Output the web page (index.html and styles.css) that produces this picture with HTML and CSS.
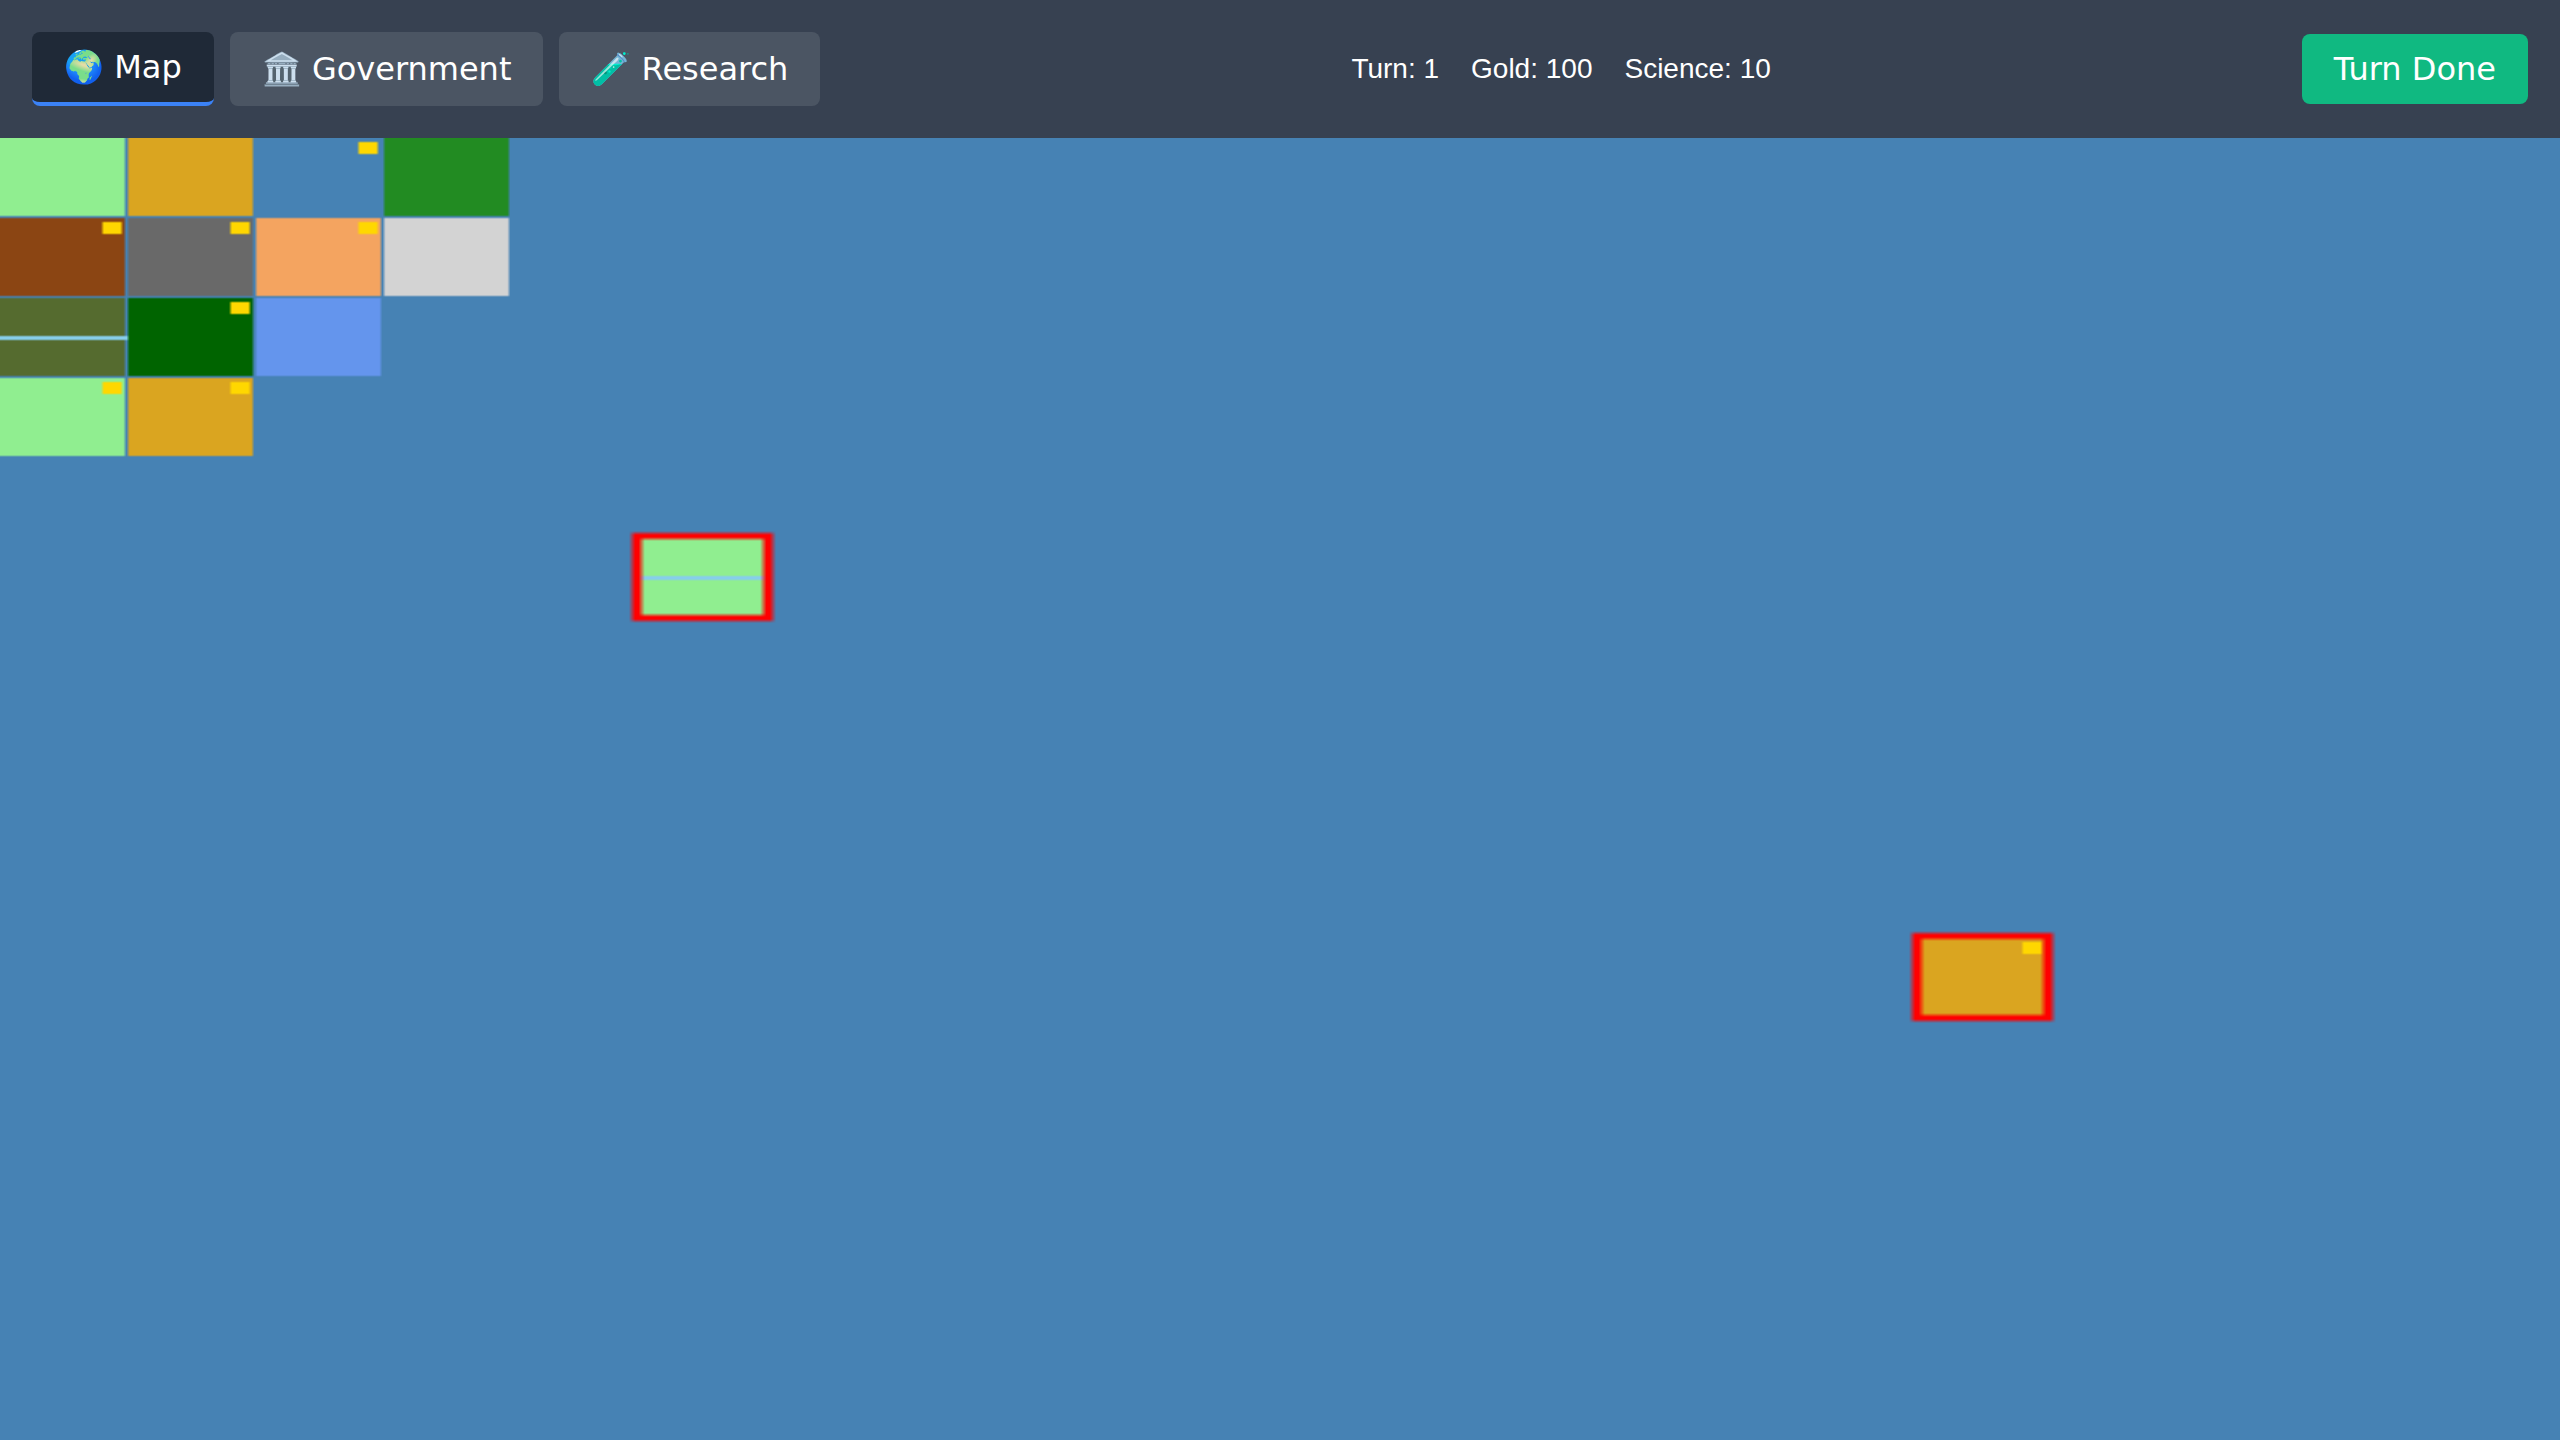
FILE: index.html
```
<!DOCTYPE html>
<html lang="en">
<head>
  <meta charset="utf-8">
  <title>World Map</title>
  <link rel="stylesheet" href="styles.css">
</head>
<body>
  <header class="topbar">
    <nav class="tabs">
      <button type="button" class="btn tab tab-active">🌍 Map</button>
      <button type="button" class="btn tab">🏛️ Government</button>
      <button type="button" class="btn tab">🧪 Research</button>
    </nav>
    <div class="stats">
      <span>Turn: 1</span>
      <span>Gold: 100</span>
      <span>Science: 10</span>
    </div>
    <button type="button" class="btn turn-done">Turn Done</button>
  </header>
  <main class="map">
    <canvas class="map-canvas" id="map" aria-label="World map"></canvas>
  </main>
  <script src="map.js"></script>
</body>
</html>
```

FILE: styles.css
```
* {
  box-sizing: border-box;
}

body {
  margin: 0;
  height: 100vh;
  display: flex;
  flex-direction: column;
  overflow: hidden;
  background: #4682b4;
  color: #fff;
  font-family: "Liberation Sans", Arial, sans-serif;
  font-size: 28px;
}

.topbar {
  display: flex;
  align-items: center;
  justify-content: space-between;
  padding: 32px;
  background: #374151;
}

.tabs {
  display: flex;
  gap: 16px;
}

.btn {
  border: 0;
  border-radius: 8px;
  padding: 16px 32px;
  color: #fff;
  font-family: "DejaVu Sans", sans-serif;
  font-size: 32px;
  line-height: 38px;
  cursor: pointer;
}

.tab {
  min-height: 74px;
  background: #4b5563;
}

.tab-active {
  background: #1f2937;
  border-bottom: 4px solid #3b82f6;
}

.stats {
  display: flex;
  gap: 32px;
}

.turn-done {
  background: #10b981;
}

.map {
  flex: 1;
  min-height: 0;
}

.map-canvas {
  display: block;
  width: 100%;
  height: 100%;
}
```

FILE: map.js
```
const TILE = 40;
const VIEW_WIDTH = 800;

const COLORS = {
  grassland: '#90ee90',
  plains: '#daa520',
  ocean: '#4682b4',
  forest: '#228b22',
  hills: '#8b4513',
  mountains: '#696969',
  desert: '#f4a460',
  tundra: '#d3d3d3',
  swamp: '#556b2f',
  jungle: '#006400',
  lake: '#6495ed'
};

const tiles = [
  { x: 0, y: 0, terrain: 'grassland' },
  { x: 1, y: 0, terrain: 'plains' },
  { x: 2, y: 0, terrain: 'ocean', resource: true },
  { x: 3, y: 0, terrain: 'forest' },
  { x: 0, y: 1, terrain: 'hills', resource: true },
  { x: 1, y: 1, terrain: 'mountains', resource: true },
  { x: 2, y: 1, terrain: 'desert', resource: true },
  { x: 3, y: 1, terrain: 'tundra' },
  { x: 0, y: 2, terrain: 'swamp', river: true },
  { x: 1, y: 2, terrain: 'jungle', resource: true },
  { x: 2, y: 2, terrain: 'lake' },
  { x: 0, y: 3, terrain: 'grassland', resource: true },
  { x: 1, y: 3, terrain: 'plains', resource: true },
  { x: 5, y: 5, terrain: 'grassland', river: true, start: true },
  { x: 15, y: 10, terrain: 'plains', resource: true, start: true }
];

function drawTile(ctx, tile) {
  const left = tile.x * TILE;
  const top = tile.y * TILE;

  ctx.fillStyle = COLORS[tile.terrain];
  ctx.fillRect(left, top, TILE - 1, TILE - 1);

  if (tile.river) {
    ctx.fillStyle = '#87ceeb';
    ctx.fillRect(left, top + TILE / 2 - 1, TILE, 2);
  }
  if (tile.start) {
    ctx.strokeStyle = '#ff0000';
    ctx.lineWidth = 3;
    ctx.strokeRect(left - 1, top - 1, TILE + 1, TILE + 1);
  }
  if (tile.resource) {
    ctx.fillStyle = '#ffd700';
    ctx.fillRect(left + TILE - 8, top + 2, 6, 6);
  }
}

function drawMap() {
  const canvas = document.getElementById('map');
  canvas.width = VIEW_WIDTH;
  canvas.height = Math.round(canvas.clientHeight / 2);
  const ctx = canvas.getContext('2d');
  ctx.fillStyle = COLORS.ocean;
  ctx.fillRect(0, 0, canvas.width, canvas.height);
  tiles.forEach((tile) => drawTile(ctx, tile));
}

drawMap();
window.addEventListener('resize', drawMap);
```
